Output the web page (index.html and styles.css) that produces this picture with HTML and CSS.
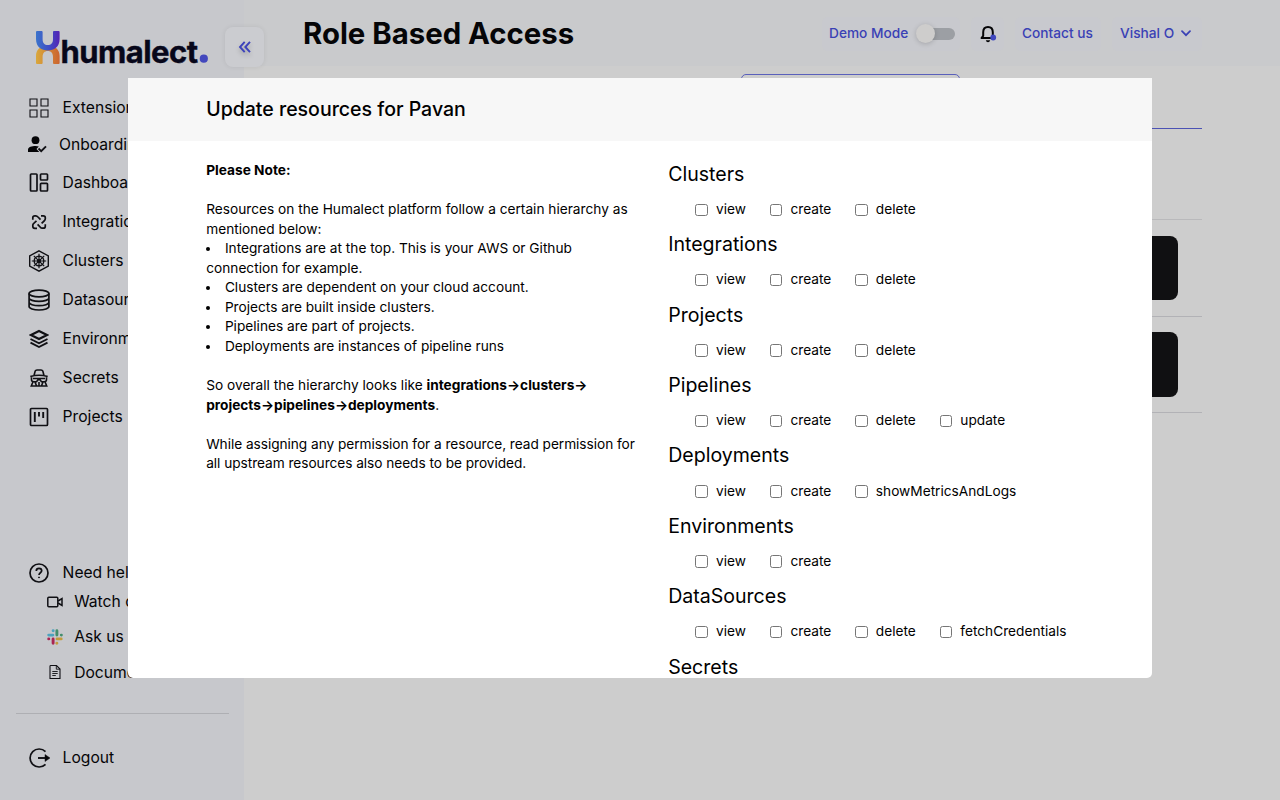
FILE: index.html
```html
<!DOCTYPE html>
<html lang="en">
<head>
<meta charset="utf-8">
<title>Role Based Access</title>
<link rel="stylesheet" href="styles.css">
</head>
<body>
<div class="app">
  <aside class="sidebar">
    <div class="brand">
      <svg class="brand-logo" width="174" height="40" viewBox="0 0 174 40">
        <defs>
          <linearGradient id="top" x1="0" x2="1" y1="0" y2="0"><stop offset="0" stop-color="#3b74cb"/><stop offset=".6" stop-color="#4049c4"/><stop offset="1" stop-color="#5522b4"/></linearGradient>
          <linearGradient id="bottom" x1="0" x2="1" y1="0" y2="0"><stop offset="0" stop-color="#d9a83c"/><stop offset="1" stop-color="#cb6430"/></linearGradient>
        </defs>
        <path d="M0 33V26C0 20 4 15.500 11.800 15.500S23.600 20 23.600 26V33Q23.600 34 22.600 34H18Q17 34 17 33V27C17 23 15 21 11.800 21S6.600 23 6.600 27V33Q6.600 34 5.600 34H1Q0 34 0 33Z" fill="url(#bottom)"/>
        <path d="M0 2Q0 1 1 1H5.600Q6.600 1 6.600 2V9C6.600 13 8.500 15 11.800 15S17 13 17 9V2Q17 1 18 1H22.600Q23.600 1 23.600 2V9C23.600 17 18 20.500 11.800 20.500S0 17 0 9Z" fill="url(#top)"/>
        <text class="brand-name" x="24.500" y="32.500" textLength="137.500" lengthAdjust="spacing">humalect</text>
        <circle cx="167.800" cy="28.700" r="4.100" fill="#4348bd"/>
      </svg>
    </div>
    <nav class="nav">
      <a class="nav-item first"><svg class="icon" viewBox="0 0 20 20"><path d="M1 1h7v7H1zM12 1h7v7h-7zM1 12h7v7H1zM12 12h7v7h-7z" stroke-width="1.100"/></svg>Extensions</a>
      <a class="nav-item onboarding"><svg class="icon" viewBox="0 0 20 20"><g fill="#050507" stroke="none"><circle cx="8.500" cy="5.200" r="3.900"/><path d="M1 17v-2.200C1 12 5 11 8.500 11q1.800 0 3.300.5L9.500 14l2.800 3z"/></g><path d="M11.500 13.500l2.700 2.700L19 11.300" stroke-width="1.900"/></svg>Onboarding</a>
      <a class="nav-item"><svg class="icon" viewBox="0 0 20 20"><rect x="1.500" y="1" width="6.500" height="17" rx=".8"/><rect x="11.500" y="1" width="7" height="6" rx=".8"/><rect x="11.500" y="10.300" width="7" height="7.700" rx=".8"/></svg>Dashboard</a>
      <a class="nav-item"><svg class="icon" viewBox="0 0 20 20"><path d="M3.800 7.800V5.800q0-2 2-2h1q1.200 0 2.200 1.200l2.500 2.700M12 3.800h2.300q2 0 2 2v1q0 1.200-1.200 2.200l-2.500 2.300M16.300 12.200v2q0 2-2 2h-1q-1.200 0-2.200-1.200l-2.500-2.700M8 16.300H5.800q-2 0-2-2v-1q0-1.200 1.200-2.200l2.500-2.300"/></svg>Integrations</a>
      <a class="nav-item"><svg class="icon cluster-icon" viewBox="0 0 22 22"><path d="M11 .8l9.300 5v10.400l-9.300 5-9.300-5V5.800z" stroke-width="1.400"/><circle cx="11" cy="11" r="4.800" stroke-width="1.400"/><path d="M11 3.800v14.400M3.800 11h14.400M5.800 5.800l10.400 10.400M16.200 5.800L5.800 16.200" stroke-width="1.200"/><circle cx="11" cy="11" r="1.200" fill="#111"/></svg>Clusters</a>
      <a class="nav-item"><svg class="icon cluster-icon" viewBox="0 0 22 22"><ellipse cx="11" cy="4.500" rx="9.900" ry="3.400"/><path d="M1.100 4.500v13c0 1.900 4.400 3.500 9.900 3.500s9.900-1.600 9.900-3.500v-13M1.100 9c0 1.900 4.400 3.400 9.900 3.400S20.900 10.900 20.900 9M1.100 13.300c0 1.900 4.400 3.400 9.900 3.400s9.900-1.500 9.900-3.400"/></svg>Datasources</a>
      <a class="nav-item"><svg class="icon" viewBox="0 0 20 20"><path d="M10 2l8 4-8 4-8-4z" stroke-width="2.100"/><path d="M1.500 10l8.500 4.300 8.500-4.300M1.500 13.700L10 18l8.500-4.300" stroke-width="1.900"/></svg>Environments</a>
      <a class="nav-item"><svg class="icon" viewBox="0 0 20 20"><path d="M5 7.500l1.200-4.400Q6.600 2 8 2h4q1.400 0 1.800 1.100L15 7.500M1.300 8.600Q10 6 18.700 8.600M2.500 9.200v2.500q0 2 2.500 2h2.500l1.500-2h2l1.500 2H15q2.500 0 2.500-2V9.200M4 13.800L2.300 18h15.400L16 13.800M6 14l1.500 3.800M14 14l-1.500 3.800M4 10.500h12M10 14v4" stroke-width="1.600"/></svg>Secrets</a>
      <a class="nav-item"><svg class="icon" viewBox="0 0 20 20"><rect x="1.500" y="1.500" width="17" height="17" rx="1"/><path d="M5.800 5v10M10 5v4.500M14.200 5v6" stroke-width="1.900"/></svg>Projects</a>
    </nav>
    <div class="help">
      <a class="nav-item"><svg class="icon" viewBox="0 0 20 20"><circle cx="10" cy="10" r="9"/><path d="M7.300 8Q7.300 5.300 10 5.300T12.700 7.800C12.700 9.800 10 9.800 10 12.100" stroke-width="1.700"/><circle cx="10" cy="14.400" r=".5" fill="#050507" stroke-width="1"/></svg>Need help?</a>
      <a class="sub-item video"><svg class="sub-icon" viewBox="0 0 16 16"><rect x=".8" y="3.200" width="10" height="9.600" rx="1"/><path d="M11 7l4-2.500v7L11 9"/></svg>Watch demo</a>
      <a class="sub-item"><svg class="sub-icon" viewBox="0 0 16 16"><g stroke-width="2.900" stroke-linecap="round"><path d="M1.700 6.100h4.200M6.100 1.700h.1" stroke="#4da3be"/><path d="M9.900 1.700v4.400M14.300 6.100h.1" stroke="#438e6c"/><path d="M14.200 9.900H10M9.900 14.300h-.1" stroke="#c39b3d"/><path d="M6.100 14.300V9.900M1.700 9.900h.1" stroke="#aa2552"/></g></svg>Ask us</a>
      <a class="sub-item docs"><svg class="sub-icon" viewBox="0 0 16 16"><path d="M3.800 1.500H9.500L13 5v9.500H3V2.300q0-.8.800-.8z" stroke-width="1.100"/><path d="M9.300 1.700V5.200H13M5.300 7.500h5.400M5.300 9.500h5.400M5.300 11.500h3.500" stroke-width=".9"/></svg>Documents</a>
    </div>
    <div class="divider"></div>
    <a class="nav-item logout"><svg class="icon logout-icon" viewBox="0 0 22 20"><path d="M16.500 3.700A9 9 0 1 0 16.500 16.300" stroke-width="1.700"/><path d="M9 10h8" stroke-width="1.900"/><path d="M16 6.500l5 3.500-5 3.500z" fill="#050507" stroke-width=".5"/></svg>Logout</a>
    <button class="collapse" aria-label="Collapse"><svg width="14" height="14" viewBox="0 0 14 14"><path d="M6.700 1.800L2 7l4.700 5.200M12 1.800L7.300 7l4.700 5.200"/></svg></button>
  </aside>
  <main class="main">
    <header class="topbar">
      <h1 class="title">Role Based Access</h1>
      <div class="actions">
        <div class="pill demo">Demo Mode<span class="switch"><span class="knob"></span></span></div>
        <div class="pill bell"><svg width="17" height="18" viewBox="0 0 17 18"><path d="M1.500 13h13L12.800 10.800V7.300C12.800 4 11 2 8 2S3.200 4 3.200 7.300v3.500z" fill="none" stroke="#050507" stroke-width="2" stroke-linejoin="round"/><path d="M5.800 15.300h4.400Q9.700 17.200 8 17.200T5.800 15.300z" fill="#050507"/><circle cx="13.200" cy="12.500" r="2.900" fill="#4048bf"/></svg></div>
        <div class="pill contact">Contact us</div>
        <div class="pill user">Vishal O<svg width="10" height="7" viewBox="0 0 10 7"><path d="M1 1.200l4 4 4-4" fill="none" stroke="#3a41b5" stroke-width="1.700" stroke-linecap="round"/></svg></div>
      </div>
    </header>
    <section class="content">
      <div class="tab"></div>
      <div class="tab-line"></div>
      <div class="table">
        <div class="row"><div class="chip"></div></div>
        <div class="row"><div class="chip"></div></div>
      </div>
    </section>
  </main>
</div>

<div class="modal">
  <div class="modal-head"><h2 class="modal-title">Update resources for Pavan</h2></div>
  <div class="modal-body">
    <div class="note">
      <p><b>Please Note:</b></p>
      <br>
      <p>Resources on the Humalect platform follow a certain hierarchy as mentioned below:</p>
      <ul class="list">
        <li>Integrations are at the top. This is your AWS or Github connection for example.</li>
        <li>Clusters are dependent on your cloud account.</li>
        <li>Projects are built inside clusters.</li>
        <li>Pipelines are part of projects.</li>
        <li>Deployments are instances of pipeline runs</li>
      </ul>
      <br>
      <p>So overall the hierarchy looks like <b>integrations→clusters→<br>projects→pipelines→deployments</b>.</p>
      <br>
      <p class="closing">While assigning any permission for a resource, read permission for all upstream resources also needs to be provided.</p>
    </div>
    <div class="perms">
      <div class="group"><h3>Clusters</h3><div class="checks"><label><input type="checkbox">view</label><label><input type="checkbox">create</label><label><input type="checkbox">delete</label></div></div>
      <div class="group"><h3>Integrations</h3><div class="checks"><label><input type="checkbox">view</label><label><input type="checkbox">create</label><label><input type="checkbox">delete</label></div></div>
      <div class="group"><h3>Projects</h3><div class="checks"><label><input type="checkbox">view</label><label><input type="checkbox">create</label><label><input type="checkbox">delete</label></div></div>
      <div class="group"><h3>Pipelines</h3><div class="checks"><label><input type="checkbox">view</label><label><input type="checkbox">create</label><label><input type="checkbox">delete</label><label><input type="checkbox">update</label></div></div>
      <div class="group"><h3>Deployments</h3><div class="checks"><label><input type="checkbox">view</label><label><input type="checkbox">create</label><label><input type="checkbox">showMetricsAndLogs</label></div></div>
      <div class="group"><h3>Environments</h3><div class="checks"><label><input type="checkbox">view</label><label><input type="checkbox">create</label></div></div>
      <div class="group"><h3>DataSources</h3><div class="checks"><label><input type="checkbox">view</label><label><input type="checkbox">create</label><label><input type="checkbox">delete</label><label><input type="checkbox">fetchCredentials</label></div></div>
      <div class="group"><h3>Secrets</h3></div>
    </div>
  </div>
</div>
</body>
</html>
```
FILE: styles.css
```css
* { box-sizing: border-box; margin: 0; padding: 0; }
body { width: 1280px; height: 800px; overflow: hidden; font-family: Inter, "Liberation Sans", sans-serif; font-size: 13.7px; line-height: 19.56px; color: #050507; background: #cdcdcd; }
.app { display: flex; height: 800px; }

.sidebar { position: relative; width: 244px; height: 800px; display: flex; flex-direction: column; background: #c7c8cc; }
.brand { height: 89.5px; padding: 30px 0 0 36px; }
.brand-logo { display: block; }
.brand-name { font-size: 31px; font-weight: 700; fill: #07071a; stroke: #07071a; stroke-width: .4px; }
.nav { display: flex; flex-direction: column; height: 466px; }
.nav-item { display: flex; align-items: center; height: 39.1px; flex-shrink: 0; padding-left: 29px; gap: 13.6px; font-size: 15.65px; white-space: nowrap; }
.nav-item.first { height: 37px; }
.nav-item.onboarding { height: 36.5px; padding: 1px 0 0 27px; gap: 12px; }
.icon { width: 20px; height: 20px; flex-shrink: 0; fill: none; stroke: #101014; stroke-width: 1.7; }
.cluster-icon { width: 22px; height: 22px; margin: 0 -1px; }
.sub-icon { width: 16px; height: 16px; flex-shrink: 0; fill: none; stroke: #101014; stroke-width: 1.5; }
.help { height: 157px; padding-top: 1px; }
.help .nav-item { height: 32px; }
.sub-item { display: flex; align-items: center; height: 35.2px; padding-left: 47px; gap: 11.2px; font-size: 15.65px; white-space: nowrap; }
.sub-item.video { height: 27px; margin-bottom: 4px; }
.divider { width: 213px; height: 1px; margin: 0 0 24.5px 16px; background: #aeafb3; }
.logout { gap: 11.6px; }
.logout-icon { width: 22px; }
.collapse { position: absolute; left: 225px; top: 27px; width: 39px; height: 40px; border: 0; border-radius: 8px; background: #cbccd0; box-shadow: 0 0 5px rgba(0,0,0,.08); display: flex; align-items: center; justify-content: center; z-index: 2; }
.collapse svg { fill: none; stroke: #3d43bb; stroke-width: 1.9; filter: drop-shadow(0 3px 2px rgba(0,0,0,.2)); }

.main { flex: 1; display: flex; flex-direction: column; }
.topbar { height: 66px; display: flex; justify-content: space-between; padding: 0 78px 0 59px; background: #c9cacc; }
.title { font-size: 29.35px; line-height: 36px; margin-top: 16px; font-weight: 700; white-space: nowrap; }
.actions { display: flex; gap: 11px; padding-top: 16.5px; }
.pill { display: flex; align-items: center; height: 34px; border-radius: 6px; background: #c8c9ce; color: #3a41b5; font-weight: 500; white-space: nowrap; }
.demo { width: 138px; padding-left: 7px; gap: 12px; }
.switch { position: relative; width: 35px; height: 12px; border-radius: 6px; background: #9c9fa4; }
.knob { position: absolute; left: -4px; top: -3.5px; width: 19px; height: 19px; border-radius: 50%; background: #cecdcc; box-shadow: 0 1px 5px rgba(0,0,0,.18); }
.bell { width: 33px; padding-left: 2px; justify-content: center; }
.contact { width: 86px; padding-right: 1px; justify-content: center; }
.user { width: 90px; padding-left: 8px; gap: 7px; }
.content { width: 899px; margin-left: 59px; }
.tab { width: 219px; height: 46px; margin: 8px 0 0 438px; border: 1.5px solid #5a60bb; border-radius: 5px; }
.tab-line { height: 1.5px; margin-top: 7.5px; background: #4c52b4; }
.table { margin-top: 90px; border-top: 1px solid #b9b9bb; }
.row { height: 96.5px; display: flex; justify-content: flex-end; align-items: center; padding-right: 24px; border-bottom: 1.5px solid #b2b2b6; }
.chip { width: 220px; height: 64.5px; border-radius: 8px; background: #101012; }

.modal { position: absolute; left: 128px; top: 78px; width: 1024px; height: 600px; overflow: hidden; background: #fff; border-radius: 0 0 5px 5px; color: #000; z-index: 5; }
.modal-head { height: 62.5px; display: flex; align-items: center; padding: 2px 0 0 78.2px; background: #f7f7f7; }
.modal-title { font-size: 19.53px; font-weight: 500; }
.modal-body { display: flex; gap: 28px; padding: 20.4px 78px 0 78.2px; }
.note { width: 434px; }
.closing { letter-spacing: -.05px; }
.list { list-style: disc inside; }
.perms { flex: 1; }
.group { height: 70.4px; }
.group h3 { font-size: 19.56px; line-height: 27.4px; font-weight: 400; }
.checks { display: flex; gap: 24px; padding: 11.7px 0 0 27.3px; }
.checks label { display: flex; align-items: center; gap: 8px; white-space: nowrap; }
.checks input { appearance: none; width: 12.5px; height: 12.5px; border: 1px solid #767676; border-radius: 2.5px; background: #fff; }
```
